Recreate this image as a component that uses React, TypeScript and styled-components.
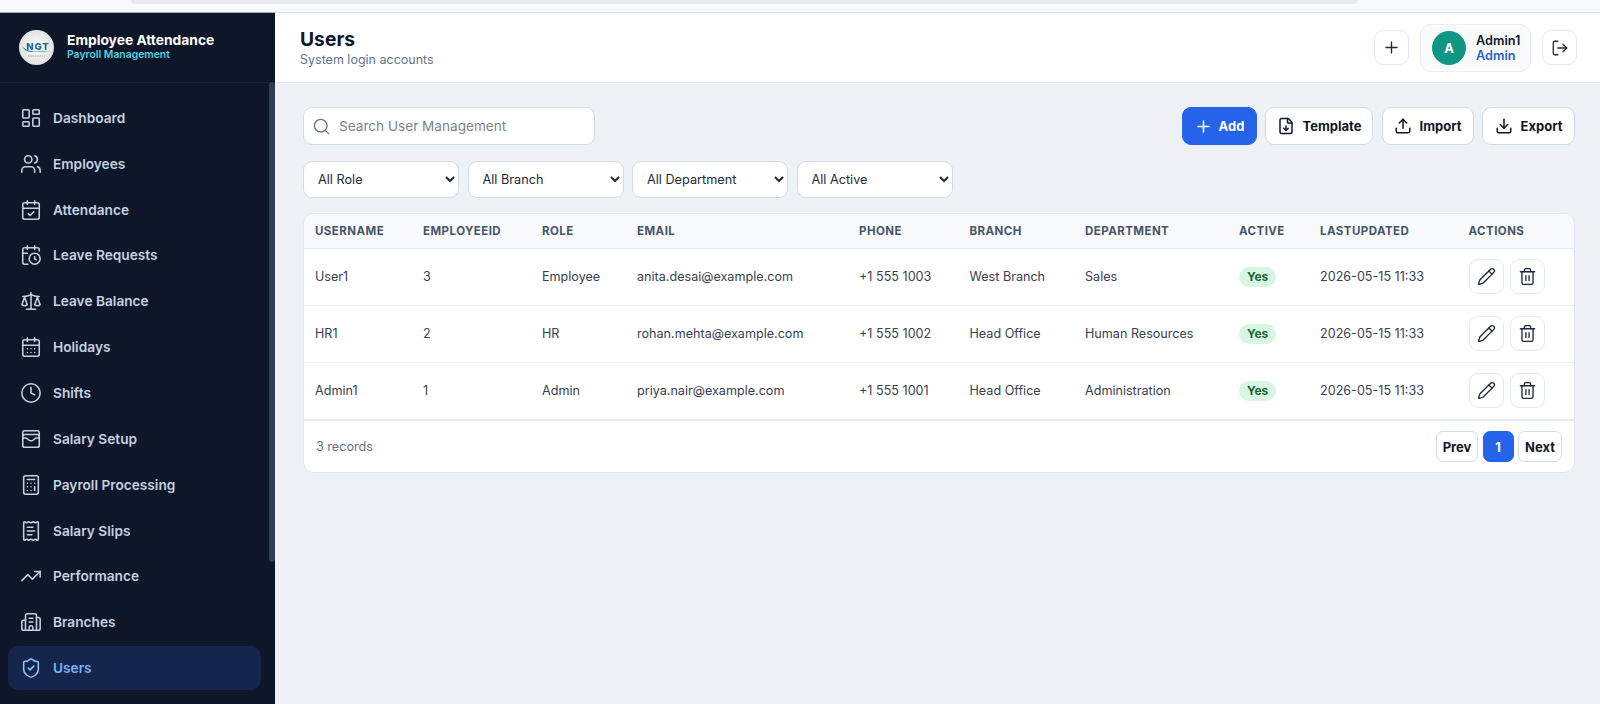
import React from 'react';
import styled, { createGlobalStyle } from 'styled-components';
import {
  LayoutDashboard, Users, CalendarCheck, CalendarClock, Scale, CalendarDays, Clock, WalletCards,
  Calculator, ReceiptText, TrendingUp, Building2, ShieldCheck, Plus, LogOut, FileDown, Upload,
  Download, Search, Pencil, Trash2,
} from 'lucide-react';

const Global = createGlobalStyle`
  html, body { margin: 0; padding: 0; height: 100%; overflow: hidden; background: #eef2f6; }
  #root { height: 100%; }
  * { box-sizing: border-box; }
  body { font-family: Inter, "Noto Sans", "Liberation Sans", sans-serif; }
`;

const Page = styled.div`
  height: 704px; display: flex; flex-direction: column; overflow: hidden;
`;
const BrowserEdge = styled.div`
  height: 13px; flex: none; background: #f8f9fa; border-bottom: 1px solid #dfe1e5; position: relative;
`;
const BrowserTab = styled.div`
  position: absolute; left: 131px; width: 1227px; top: 0; height: 4px; background: #e9eaea;
  border-radius: 0 0 12px 12px;
`;
const Shell = styled.div`
  flex: 1; display: flex; min-height: 0;
`;
const Sidebar = styled.aside`
  width: 275px; flex: none; background: #0e1729; position: relative; overflow: hidden;
  box-shadow: 0 -1px 0 #a9aeb6;
`;
const Brand = styled.div`
  height: 70px; display: flex; align-items: center; gap: 13px; padding: 0 19px;
  border-bottom: 1px solid #172132;
`;
const BrandText = styled.div`
  display: flex; flex-direction: column; margin-top: -1px;
`;
const BrandTitle = styled.div`
  color: #fff; font-size: 13.8px; font-weight: 700; line-height: 16px;
`;
const BrandSub = styled.div`
  color: #4fd0e0; font-size: 10.4px; font-weight: 600; line-height: 14px;
`;
const Nav = styled.nav`
  display: flex; flex-direction: column; gap: 2px; padding: 13px 14px 0 8px;
`;
const NavItem = styled.div<{ $active?: boolean }>`
  height: 43.85px; flex: none; display: flex; align-items: center; gap: 11px; padding: 0 13px 0 12px;
  border-radius: 10px; font-size: 13.7px; font-weight: 600;
  color: ${p => (p.$active ? '#78b4f5' : '#c5d0e0')};
  background: ${p => (p.$active ? '#14264b' : 'transparent')};
  svg { flex: none; color: ${p => (p.$active ? '#8fc2f8' : '#c5d0e0')}; }
`;
const ScrollThumb = styled.div`
  position: absolute; right: 0; top: 69px; width: 6px; height: 480px; background: #2f3d52;
  border-radius: 3px;
`;
const Main = styled.main`
  flex: 1; min-width: 0; display: flex; flex-direction: column;
`;
const TopBar = styled.header`
  height: 70px; flex: none; background: #fff; display: flex; align-items: center;
  justify-content: space-between; padding: 0 23px 0 25px; border-bottom: 1px solid #e6ebf1;
`;
const PageTitle = styled.h1`
  margin: 0; font-size: 19.3px; line-height: 24px; font-weight: 700; color: #0f172a;
`;
const PageSub = styled.div`
  font-size: 12.5px; line-height: 17px; color: #64748b;
`;
const TopActions = styled.div`
  display: flex; align-items: center; gap: 11px;
`;
const IconButton = styled.button`
  width: 35px; height: 35px; padding: 0; display: flex; align-items: center; justify-content: center;
  background: #fff; border: 1px solid #e2e8f0; border-radius: 9px; color: #1e293b;
`;
const Profile = styled.div`
  width: 111px; height: 48px; display: flex; align-items: center; gap: 10px; padding: 0 10px 0 11px;
  background: #f8fafc; border: 1px solid #e9eef4; border-radius: 11px;
`;
const Avatar = styled.div`
  width: 34px; height: 34px; flex: none; border-radius: 50%; background: #129684; color: #fff;
  display: flex; align-items: center; justify-content: center; font-size: 13px; font-weight: 700;
`;
const ProfileText = styled.div`
  display: flex; flex-direction: column; font-size: 12.7px; font-weight: 600; line-height: 15px;
`;
const ProfileName = styled.span`
  color: #0f172a;
`;
const ProfileRole = styled.span`
  color: #2f5fd0;
`;
const Content = styled.div`
  flex: 1; padding: 24px 25px 0 28px; display: flex; flex-direction: column;
`;
const Toolbar = styled.div`
  display: flex; justify-content: space-between; align-items: center;
`;
const SearchBox = styled.label`
  width: 292px; height: 38px; display: flex; align-items: center; gap: 8px; padding: 0 8px;
  background: #fff; border: 1px solid #d3dbe6; border-radius: 9px; color: #64748b;
`;
const SearchInput = styled.input`
  flex: 1; min-width: 0; border: 0; outline: 0; padding: 0; background: transparent;
  font: 400 13.6px Inter, sans-serif;
  &::placeholder { color: #7a8491; opacity: 1; }
`;
const Actions = styled.div`
  display: flex; gap: 8.5px;
`;
const ActionButton = styled.button<{ $primary?: boolean; $w: number }>`
  width: ${p => p.$w}px; height: 38px; display: flex; align-items: center; justify-content: center;
  gap: ${p => (p.$primary ? 6 : 8)}px; padding: 0; border-radius: 9px; font: 700 13px Inter, sans-serif;
  background: ${p => (p.$primary ? '#2563eb' : '#fff')};
  color: ${p => (p.$primary ? '#fff' : '#0f172a')};
  border: 1px solid ${p => (p.$primary ? '#2563eb' : '#d3dbe6')};
`;
const Filters = styled.div`
  display: flex; gap: 8.5px; margin-top: 16px;
`;
const Select = styled.select`
  width: 156px; height: 37px; padding: 0 10px; background: #fff; border: 1px solid #d3dbe6;
  border-radius: 9px; color: #1f2937; font: 400 12.7px Inter, sans-serif;
`;
const Card = styled.section`
  margin-top: 15px; width: 1272px; background: #fff; border: 1px solid #e2e8f0; border-radius: 11px;
  overflow: hidden;
`;
const Table = styled.table`
  width: 100%; border-collapse: collapse; table-layout: fixed;
`;
const Col = styled.col<{ $w: number }>`
  width: ${p => p.$w}px;
`;
const Th = styled.th`
  height: 34px; padding: 0 0 0 11px; text-align: left; background: #f8fafc; color: #475569;
  font-size: 11.5px; font-weight: 700; letter-spacing: 0.45px; border-bottom: 1px solid #e2e8f0;
`;
const Td = styled.td`
  height: 57px; padding: 0 0 0 11px; font-size: 12.6px; color: #374151; border-bottom: 1px solid #eef2f6;
  white-space: nowrap;
  tr:last-child & { height: 58px; border-bottom: 2px solid #e5eaef; }
`;
const Badge = styled.span`
  display: inline-block; padding: 0 8px; height: 20px; line-height: 20px; border-radius: 10px;
  background: #d8f7e3; color: #166534; font-size: 12px; font-weight: 700;
`;
const RowActions = styled.div`
  display: flex; gap: 6px;
`;
const Footer = styled.div`
  height: 51px; display: flex; align-items: center; justify-content: space-between; padding: 0 12px;
`;
const Records = styled.div`
  font-size: 12.6px; color: #64748b;
`;
const Pager = styled.div`
  display: flex; gap: 4.5px;
`;
const PageButton = styled.button<{ $active?: boolean; $w: number }>`
  width: ${p => p.$w}px; height: 31px; padding: 0; border-radius: 7px; font: 700 13px Inter, sans-serif;
  background: ${p => (p.$active ? '#2563eb' : '#fff')};
  color: ${p => (p.$active ? '#fff' : '#0f172a')};
  border: 1px solid ${p => (p.$active ? '#2563eb' : '#d3dbe6')};
`;

const Logo = () => (
  <svg width="35" height="35" viewBox="0 0 35 35" style={{ flex: 'none' }}>
    <defs>
      <radialGradient id="lg" cx="50%" cy="50%" r="55%">
        <stop offset="0%" stopColor="#ffffff" />
        <stop offset="100%" stopColor="#dedfdc" />
      </radialGradient>
    </defs>
    <circle cx="17.5" cy="17.5" r="17.5" fill="url(#lg)" />
    <text x="19" y="19.5" textAnchor="middle" fontFamily="Inter, sans-serif" fontSize="9.5" fontWeight="800" letterSpacing="1" fill="#1b6a80">NGT</text>
    <path d="M3 16c2 5 7 6.500 13 6 5-.4 10-.8 16-.4-6-1.300-11-.5-16-.2-5 .3-10-1.900-13-5.400z" fill="#12907f" />
    <path d="M9 26h17" stroke="#8a8f8f" strokeWidth="0.8" strokeDasharray="1.500 .8" />
  </svg>
);

const navItems = [
  { label: 'Dashboard', Icon: LayoutDashboard },
  { label: 'Employees', Icon: Users },
  { label: 'Attendance', Icon: CalendarCheck },
  { label: 'Leave Requests', Icon: CalendarClock },
  { label: 'Leave Balance', Icon: Scale },
  { label: 'Holidays', Icon: CalendarDays },
  { label: 'Shifts', Icon: Clock },
  { label: 'Salary Setup', Icon: WalletCards },
  { label: 'Payroll Processing', Icon: Calculator },
  { label: 'Salary Slips', Icon: ReceiptText },
  { label: 'Performance', Icon: TrendingUp },
  { label: 'Branches', Icon: Building2 },
  { label: 'Users', Icon: ShieldCheck, active: true },
];

const columns: [string, number][] = [
  ['USERNAME', 108], ['EMPLOYEEID', 119], ['ROLE', 95], ['EMAIL', 222], ['PHONE', 110.5], ['BRANCH', 115.5],
  ['DEPARTMENT', 154], ['ACTIVE', 81], ['LASTUPDATED', 148.5], ['ACTIONS', 118.5],
];

const rows = [
  ['User1', '3', 'Employee', 'anita.desai@example.com', '+1 555 1003', 'West Branch', 'Sales'],
  ['HR1', '2', 'HR', 'rohan.mehta@example.com', '+1 555 1002', 'Head Office', 'Human Resources'],
  ['Admin1', '1', 'Admin', 'priya.nair@example.com', '+1 555 1001', 'Head Office', 'Administration'],
];

export default function App() {
  return (
    <Page>
      <Global />
      <BrowserEdge><BrowserTab /></BrowserEdge>
      <Shell>
        <Sidebar>
          <Brand>
            <Logo />
            <BrandText>
              <BrandTitle>Employee Attendance</BrandTitle>
              <BrandSub>Payroll Management</BrandSub>
            </BrandText>
          </Brand>
          <Nav>
            {navItems.map(({ label, Icon, active }) => (
              <NavItem key={label} $active={active}>
                <Icon size={22} strokeWidth={1.7} />
                {label}
              </NavItem>
            ))}
          </Nav>
          <ScrollThumb />
        </Sidebar>
        <Main>
          <TopBar>
            <div>
              <PageTitle>Users</PageTitle>
              <PageSub>System login accounts</PageSub>
            </div>
            <TopActions>
              <IconButton><Plus size={19} strokeWidth={1.7} /></IconButton>
              <Profile>
                <Avatar>A</Avatar>
                <ProfileText>
                  <ProfileName>Admin1</ProfileName>
                  <ProfileRole>Admin</ProfileRole>
                </ProfileText>
              </Profile>
              <IconButton><LogOut size={18} strokeWidth={1.7} /></IconButton>
            </TopActions>
          </TopBar>
          <Content>
            <Toolbar>
              <SearchBox>
                <Search size={19} strokeWidth={1.7} />
                <SearchInput placeholder="Search User Management" />
              </SearchBox>
              <Actions>
                <ActionButton $primary $w={75}><Plus size={19} strokeWidth={2} />Add</ActionButton>
                <ActionButton $w={108}><FileDown size={18} strokeWidth={2} />Template</ActionButton>
                <ActionButton $w={92}><Upload size={18} strokeWidth={2} />Import</ActionButton>
                <ActionButton $w={93}><Download size={18} strokeWidth={2} />Export</ActionButton>
              </Actions>
            </Toolbar>
            <Filters>
              <Select><option>All Role</option></Select>
              <Select><option>All Branch</option></Select>
              <Select><option>All Department</option></Select>
              <Select><option>All Active</option></Select>
            </Filters>
            <Card>
              <Table>
                <colgroup>
                  {columns.map(([name, w]) => <Col key={name} $w={w} />)}
                </colgroup>
                <thead>
                  <tr>{columns.map(([name]) => <Th key={name}>{name}</Th>)}</tr>
                </thead>
                <tbody>
                  {rows.map(r => (
                    <tr key={r[0]}>
                      {r.map((c, i) => <Td key={i}>{c}</Td>)}
                      <Td><Badge>Yes</Badge></Td>
                      <Td>2026-05-15 11:33</Td>
                      <Td>
                        <RowActions>
                          <IconButton><Pencil size={19} strokeWidth={1.7} /></IconButton>
                          <IconButton><Trash2 size={19} strokeWidth={1.7} /></IconButton>
                        </RowActions>
                      </Td>
                    </tr>
                  ))}
                </tbody>
              </Table>
              <Footer>
                <Records>3 records</Records>
                <Pager>
                  <PageButton $w={42}>Prev</PageButton>
                  <PageButton $active $w={31}>1</PageButton>
                  <PageButton $w={44}>Next</PageButton>
                </Pager>
              </Footer>
            </Card>
          </Content>
        </Main>
      </Shell>
    </Page>
  );
}
